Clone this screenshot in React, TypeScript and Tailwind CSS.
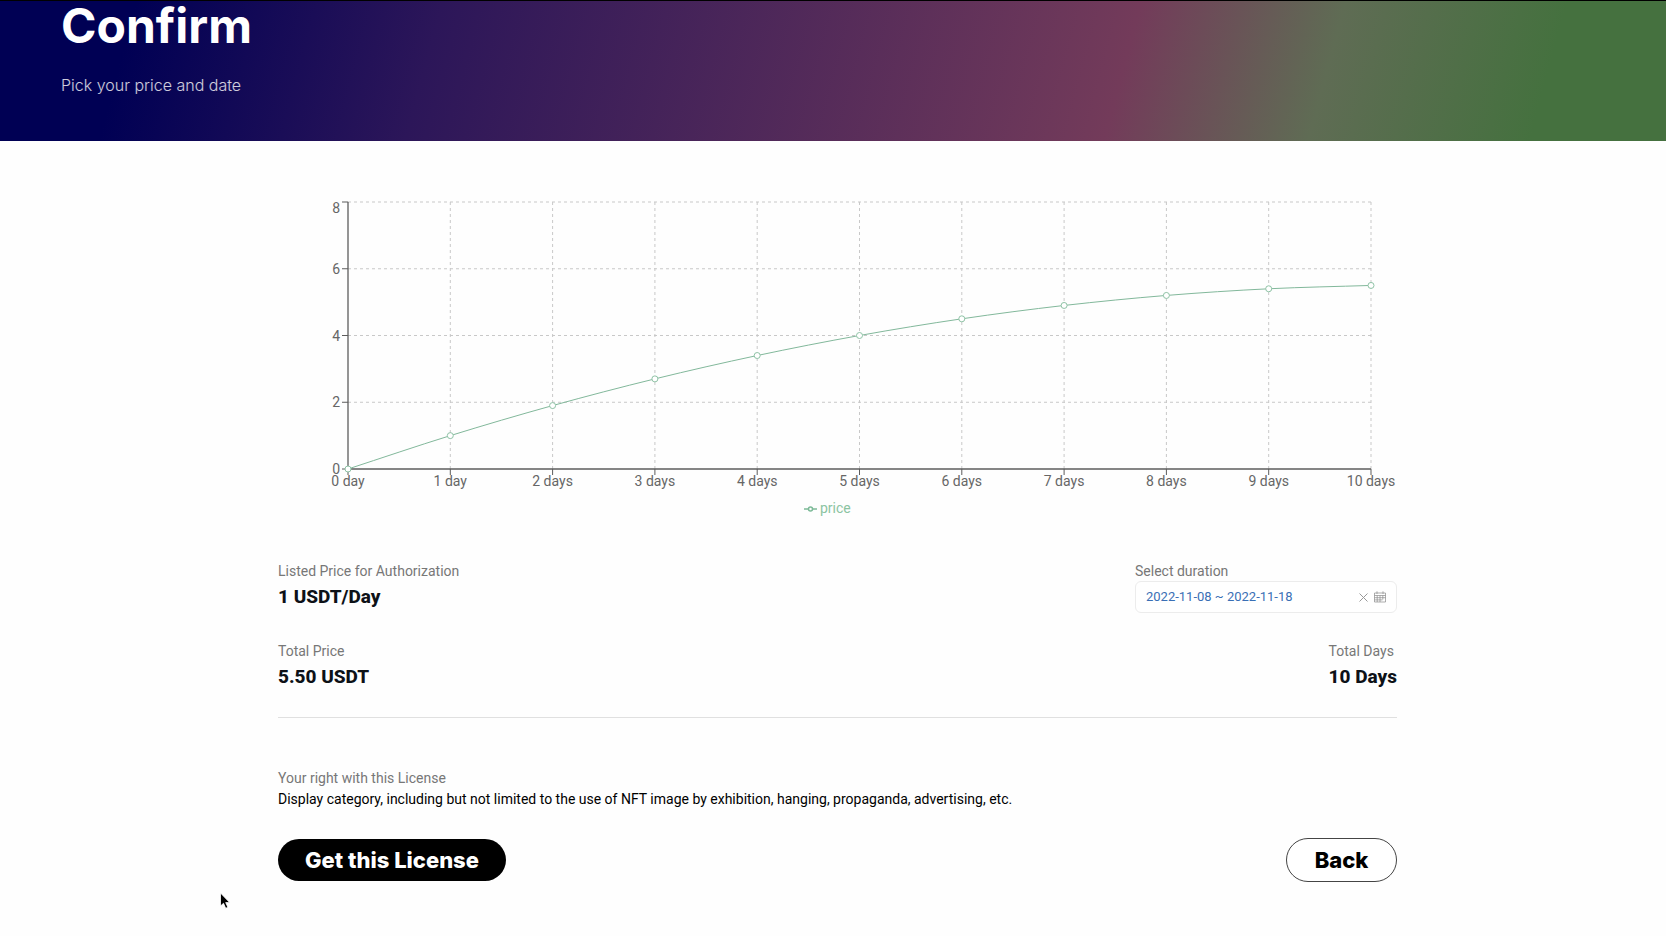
import { useState } from "react";

const prices = [0, 1, 1.9, 2.7, 3.4, 4, 4.5, 4.9, 5.2, 5.4, 5.5];
const yTicks = [0, 2, 4, 6, 8];

const LEFT = 70;
const RIGHT = 1093;
const TOP = 11;
const BOTTOM = 278;

const px = (day: number) => LEFT + (day * (RIGHT - LEFT)) / 10;
const py = (value: number) => BOTTOM - (value * (BOTTOM - TOP)) / 8;

function curvePath(values: number[]) {
  const slope = (i: number) => {
    const a = Math.max(i - 1, 0);
    const b = Math.min(i + 1, values.length - 1);
    return (py(values[b]) - py(values[a])) / (px(b) - px(a));
  };
  const third = (px(1) - px(0)) / 3;
  return values
    .map((v, i) => {
      if (i === 0) return `M${px(0)},${py(v)}`;
      const x0 = px(i - 1);
      const y0 = py(values[i - 1]);
      return `C${x0 + third},${y0 + third * slope(i - 1)} ${px(i) - third},${py(v) - third * slope(i)} ${px(i)},${py(v)}`;
    })
    .join(" ");
}

function PriceChart() {
  return (
    <svg viewBox="0 0 1119 330" className="block w-full" role="img" aria-label="Price by number of days">
      <g stroke="#c8c8c8" strokeDasharray="3 3">
        {yTicks.slice(1).map((v) => (
          <line key={v} x1={LEFT} x2={RIGHT} y1={py(v)} y2={py(v)} />
        ))}
        {prices.slice(1).map((_, i) => (
          <line key={i} x1={px(i + 1)} x2={px(i + 1)} y1={TOP} y2={BOTTOM} />
        ))}
      </g>
      <g stroke="#5c5c5c">
        <line x1={LEFT} x2={RIGHT} y1={BOTTOM} y2={BOTTOM} strokeWidth="1.3" />
        <line x1={LEFT} x2={LEFT} y1={TOP} y2={BOTTOM} strokeWidth="1.3" />
        {yTicks.map((v) => (
          <line key={v} x1={LEFT - 6} x2={LEFT} y1={py(v)} y2={py(v)} />
        ))}
        {prices.map((_, i) => (
          <line key={i} x1={px(i)} x2={px(i)} y1={BOTTOM} y2={BOTTOM + 6} />
        ))}
      </g>
      <g className="text-[14px]" fill="#666">
        {yTicks.map((v) => (
          <text key={v} x={LEFT - 8} y={v === 8 ? py(v) + 11 : py(v) + 5} textAnchor="end">
            {v}
          </text>
        ))}
        {prices.map((_, i) => (
          <text key={i} x={px(i)} y={BOTTOM + 17} textAnchor="middle">
            {i < 2 ? `${i} day` : `${i} days`}
          </text>
        ))}
      </g>
      <path d={curvePath(prices)} fill="none" stroke="#82b89b" />
      <g fill="#fff" stroke="#8fc3a6">
        {prices.map((v, i) => (
          <circle key={i} cx={px(i)} cy={py(v)} r="3" />
        ))}
      </g>
      <g stroke="#7dba98" strokeWidth="1.5" fill="none">
        <path d="M526 318h4.5M534.500 318h4.5" />
        <circle cx="532.500" cy="318" r="2" />
      </g>
      <text x="542" y="322" className="text-[14px]" fill="#8cc4a2">
        price
      </text>
    </svg>
  );
}

function CalendarIcon() {
  return (
    <svg viewBox="0 0 12 12" className="size-3" fill="none" stroke="#8a8a8a" strokeWidth=".7" aria-hidden="true">
      <path d="M.5 2h11v9H.5zM.5 4.500h11M.5 6.700h11M.5 8.900h8M3.200 4.500V11M6 4.500V11M8.800 4.500V8.500M3 .3V3M9 .3V3" />
    </svg>
  );
}

function Field({ label, value }: { label: string; value: string }) {
  return (
    <div>
      <dt className="text-sm leading-5 text-[#777]">{label}</dt>
      <dd className="pt-0.5 text-[19px] leading-7 font-extrabold text-[#0d1117]">{value}</dd>
    </div>
  );
}

export default function App() {
  const [range, setRange] = useState("2022-11-08 ~ 2022-11-18");
  return (
    <div className="min-h-screen bg-[#fefefe] font-['Roboto','Liberation_Sans',sans-serif]">
      <header className="h-[141px] border-t border-black bg-[linear-gradient(105deg,#000054_8%,#2c1659_26%,#733b5a_67%,#5f6c54_79%,#45713f_92%)] px-[61px] font-['Inter',sans-serif] text-white">
        <h1 className="text-[48px] leading-[50px] font-bold">Confirm</h1>
        <p className="pt-[22px] text-base leading-6 font-light text-white/80">Pick your price and date</p>
      </header>

      <main className="pt-[50px] pr-[269px] pb-12 pl-[278px]">
        <PriceChart />

        <dl className="flex flex-wrap justify-between pt-10">
          <Field label="Listed Price for Authorization" value="1 USDT/Day" />
          <div className="w-[262px]">
            <dt className="text-sm leading-5 text-[#777]">
              <label htmlFor="duration">Select duration</label>
            </dt>
            <dd className="flex h-8 items-center gap-1.5 rounded-md border border-[#ececec] bg-white px-2.5">
              <input
                id="duration"
                value={range}
                onChange={(e) => setRange(e.target.value)}
                className="min-w-0 flex-1 bg-transparent text-[13px] text-[#3a6fb5] outline-none"
              />
              <button type="button" aria-label="Clear dates" onClick={() => setRange("")}>
                <svg viewBox="0 0 9 9" className="size-[9px]" stroke="#999" aria-hidden="true">
                  <path d="M.5.5l8 8M8.500.5l-8 8" />
                </svg>
              </button>
              <CalendarIcon />
            </dd>
          </div>
        </dl>

        <dl className="flex justify-between border-b border-[#e0e0e0] pt-7 pb-[26px]">
          <Field label="Total Price" value="5.50 USDT" />
          <Field label="Total Days" value="10 Days" />
        </dl>

        <section className="pt-[50px] text-sm">
          <h2 className="leading-5 text-[#777]">Your right with this License</h2>
          <p className="leading-[22px] text-black">
            Display category, including but not limited to the use of NFT image by exhibition, hanging, propaganda,
            advertising, etc.
          </p>
        </section>

        <div className="flex items-center justify-between pt-7 font-['Inter',sans-serif] text-[22px] font-extrabold">
          <button type="button" className="h-[42px] w-[228px] rounded-full bg-black text-white">
            Get this License
          </button>
          <button type="button" className="h-11 w-[111px] rounded-full border border-[#444] bg-white text-black">
            Back
          </button>
        </div>
      </main>

      <svg viewBox="0 0 12 18" className="absolute top-[892px] left-[219px] h-[18px] w-3" aria-hidden="true">
        <path d="M1.500 1v13l3-2.700 2.200 5 2.200-1-2.200-4.700h4z" fill="#000" stroke="#fff" strokeWidth=".8" />
      </svg>
    </div>
  );
}
